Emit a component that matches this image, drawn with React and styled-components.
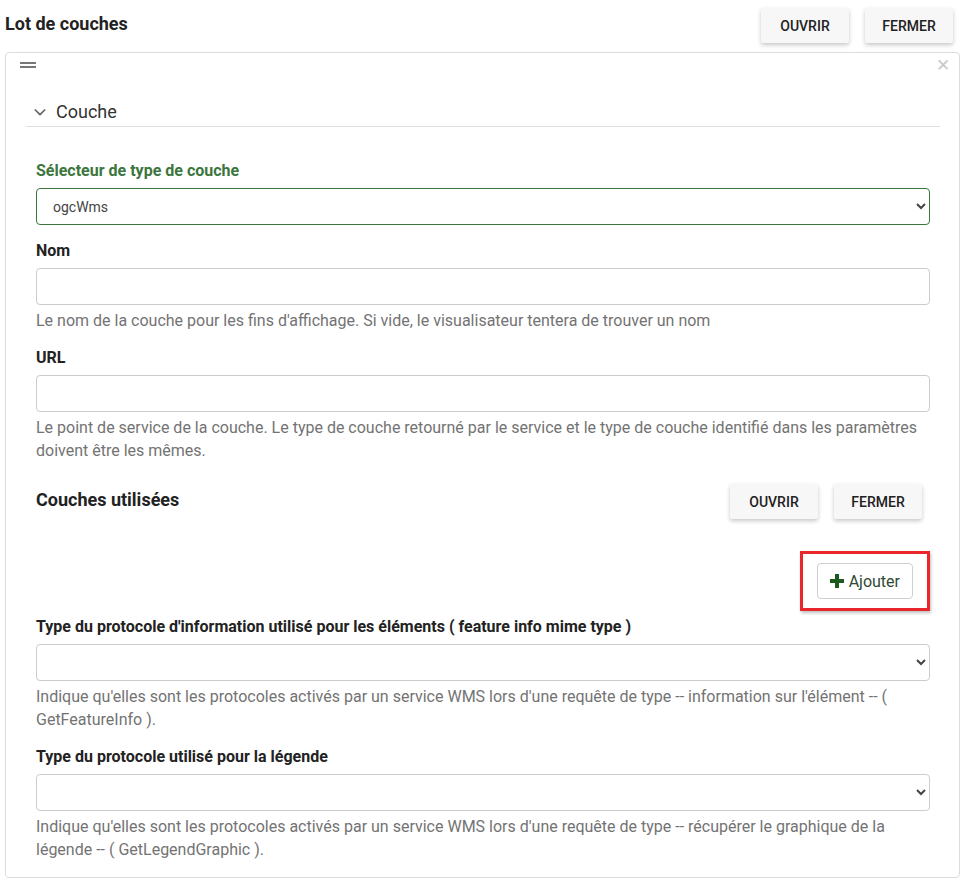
import React from 'react'
import styled, { createGlobalStyle } from 'styled-components'

const Global = createGlobalStyle`
  body {
    margin: 0;
    background: #fff;
    font-family: Roboto, "Liberation Sans", sans-serif;
    color: #222;
  }
`

const Page = styled.div`
  padding: 8px 8px 0 5px;
`

const Header = styled.div`
  display: flex;
  align-items: flex-start;
  justify-content: space-between;
  padding-right: 7px;
  height: 44px;
`

const Title = styled.h2`
  margin: 0;
  font-size: 18px;
  font-weight: 700;
  line-height: 31px;
  color: #222;
`

const BtnGroup = styled.div`
  display: flex;
  gap: 16px;
`

const FlatButton = styled.button`
  width: 88px;
  height: 35px;
  border: none;
  border-radius: 2px;
  background: #f7f7f7;
  box-shadow: 0 2px 4px rgba(0, 0, 0, 0.22);
  font-family: Roboto, "Liberation Sans", sans-serif;
  font-size: 14px;
  font-weight: 500;
  color: #222;
  text-transform: uppercase;
  cursor: pointer;
`

const Panel = styled.section`
  border: 1px solid #dcdcdc;
  border-radius: 4px;
  padding-bottom: 16px;
`

const TopBar = styled.div`
  display: flex;
  align-items: center;
  justify-content: space-between;
  height: 24px;
  padding: 0 9px 0 14px;
`

const Grip = styled.span`
  display: block;
  width: 16px;
  height: 6px;
  border-top: 2px solid #777;
  border-bottom: 2px solid #777;
  box-sizing: border-box;
`

const Close = styled.span`
  font-size: 17px;
  color: #c8c8c8;
  line-height: 1;
`

const SectionHead = styled.div`
  display: flex;
  align-items: center;
  gap: 8px;
  margin: 21px 19px 0 20px;
  padding-left: 6px;
  height: 27px;
  border-bottom: 1px solid #e0e0e0;
  font-size: 18px;
  color: #333;
  padding-bottom: 1px;
`

const Body = styled.div`
  padding: 34px 29px 0 30px;
`

const Field = styled.div`
  margin-bottom: ${p => p.$mb ?? 16}px;
`

const Label = styled.label`
  display: block;
  font-size: 16px;
  font-weight: 700;
  line-height: 20px;
  margin-bottom: 7px;
  color: ${p => (p.$ok ? '#3c763d' : '#222')};
`

const Select = styled.select`
  display: block;
  width: 100%;
  height: 37px;
  box-sizing: border-box;
  padding: 0 12px;
  border: 1px solid ${p => (p.$ok ? '#3c763d' : '#cccccc')};
  border-radius: 4px;
  background: #fff;
  font-family: Roboto, "Liberation Sans", sans-serif;
  font-size: 14px;
  color: #444;
`

const Input = styled.input`
  display: block;
  width: 100%;
  height: 37px;
  box-sizing: border-box;
  border: 1px solid #cccccc;
  border-radius: 4px;
  padding: 0 12px;
  font-size: 14px;
`

const Help = styled.p`
  margin: 4px 0 0;
  font-size: 16px;
  line-height: 23px;
  color: #737373;
`

const SubHeader = styled.div`
  display: flex;
  align-items: flex-start;
  justify-content: space-between;
  padding-right: 8px;
  margin-top: 22px;
`

const SubTitle = styled.h3`
  margin: 0;
  font-size: 18px;
  font-weight: 700;
  line-height: 31px;
  color: #222;
`

const AddRow = styled.div`
  display: flex;
  justify-content: flex-end;
  margin-top: 32px;
  margin-bottom: 6px;
`

const Highlight = styled.div`
  border: 3px solid #e8262b;
  padding: 9px 14px;
  box-shadow: 1px 2px 3px rgba(0, 0, 0, 0.25);
`

const AddButton = styled.button`
  display: flex;
  align-items: center;
  gap: 4px;
  height: 36px;
  padding: 0 12px 0 11px;
  border: 1px solid #cfcfcf;
  border-radius: 4px;
  background: #fff;
  font-family: Roboto, "Liberation Sans", sans-serif;
  font-size: 16px;
  color: #2e4a36;
  cursor: pointer;
`

const Chevron = () => (
  <svg width="16" height="16" viewBox="0 0 24 24" fill="none" stroke="#666" strokeWidth="2.6" strokeLinecap="round" strokeLinejoin="round">
    <path d="M5 9l7 7 7-7" />
  </svg>
)

const Plus = () => (
  <svg width="16" height="16" viewBox="0 0 16 16">
    <path d="M6 1h4v5h5v4h-5v5H6v-5H1V6h5z" fill="#1d5a1d" />
  </svg>
)

export default function App() {
  return (
    <Page>
      <Global />
      <Header>
        <Title>Lot de couches</Title>
        <BtnGroup>
          <FlatButton>Ouvrir</FlatButton>
          <FlatButton>Fermer</FlatButton>
        </BtnGroup>
      </Header>

      <Panel>
        <TopBar>
          <Grip />
          <Close>✕</Close>
        </TopBar>
        <SectionHead>
          <Chevron />
          <span>Couche</span>
        </SectionHead>

        <Body>
          <Field>
            <Label $ok>Sélecteur de type de couche</Label>
            <Select $ok defaultValue="ogcWms">
              <option value="ogcWms">ogcWms</option>
            </Select>
          </Field>

          <Field>
            <Label>Nom</Label>
            <Input type="text" />
            <Help>Le nom de la couche pour les fins d'affichage. Si vide, le visualisateur tentera de trouver un nom</Help>
          </Field>

          <Field $mb={0}>
            <Label>URL</Label>
            <Input type="text" />
            <Help>
              Le point de service de la couche. Le type de couche retourné par le service et le type de couche identifié dans les paramètres doivent être les mêmes.
            </Help>
          </Field>

          <SubHeader>
            <SubTitle>Couches utilisées</SubTitle>
            <BtnGroup>
              <FlatButton>Ouvrir</FlatButton>
              <FlatButton>Fermer</FlatButton>
            </BtnGroup>
          </SubHeader>

          <AddRow>
            <Highlight>
              <AddButton>
                <Plus />
                Ajouter
              </AddButton>
            </Highlight>
          </AddRow>

          <Field>
            <Label>Type du protocole d'information utilisé pour les éléments ( feature info mime type )</Label>
            <Select defaultValue="">
              <option value=""></option>
            </Select>
            <Help>
              Indique qu'elles sont les protocoles activés par un service WMS lors d'une requête de type -- information sur l'élément -- ( GetFeatureInfo ).
            </Help>
          </Field>

          <Field $mb={0}>
            <Label>Type du protocole utilisé pour la légende</Label>
            <Select defaultValue="">
              <option value=""></option>
            </Select>
            <Help>
              Indique qu'elles sont les protocoles activés par un service WMS lors d'une requête de type -- récupérer le graphique de la légende -- ( GetLegendGraphic ).
            </Help>
          </Field>
        </Body>
      </Panel>
    </Page>
  )
}
